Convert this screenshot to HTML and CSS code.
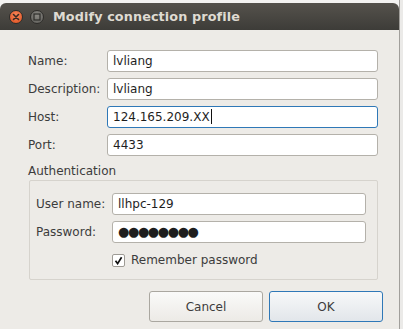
FILE: index.html
```html
<!DOCTYPE html>
<html lang="en">
<head>
    <meta charset="UTF-8">
    <meta name="viewport" content="width=device-width, initial-scale=1.0">
    <title>Modify connection profile</title>
    <link rel="stylesheet" href="styles.css">
</head>
<body>
    <div class="desktop">
        <div class="window">
            <!-- Title bar -->
            <div class="titlebar">
                <span class="wm-btn close">
                    <svg width="8" height="8" viewBox="0 0 8 8"><path d="M1.5 1.5 L6.5 6.5 M6.5 1.5 L1.5 6.5" stroke="#3a2a22" stroke-width="1.6" stroke-linecap="round"/></svg>
                </span>
                <span class="wm-btn maximize">
                    <svg width="8" height="8" viewBox="0 0 8 8"><rect x="1" y="1" width="6" height="6" fill="none" stroke="#2e2d2a" stroke-width="1.2"/></svg>
                </span>
                <span class="title">Modify connection profile</span>
            </div>

            <div class="content">
                <div class="form-grid">
                    <label for="name">Name:</label>
                    <div class="field" id="name">lvliang</div>

                    <label for="description">Description:</label>
                    <div class="field" id="description">lvliang</div>

                    <label for="host">Host:</label>
                    <div class="field focused" id="host">124.165.209.XX<span class="caret"></span></div>

                    <label for="port">Port:</label>
                    <div class="field" id="port">4433</div>
                </div>

                <div class="section-title">Authentication</div>

                <!-- Authentication group -->
                <div class="group">
                    <div class="form-grid auth-grid">
                        <label for="user">User name:</label>
                        <div class="field" id="user">llhpc-129</div>

                        <label for="password">Password:</label>
                        <div class="field password" id="password">●●●●●●●●</div>
                    </div>
                    <div class="remember">
                        <span class="checkbox">
                            <svg width="9" height="9" viewBox="0 0 9 9"><path d="M1.5 4.8 L3.6 7.6 L7.6 1.2" fill="none" stroke="#111" stroke-width="1.7"/></svg>
                        </span>
                        Remember password
                    </div>
                </div>

                <div class="buttons">
                    <button class="btn">Cancel</button>
                    <button class="btn default">OK</button>
                </div>
            </div>
        </div>
        <div class="edge"></div>
    </div>
</body>
</html>
```

FILE: styles.css
```css
body {
    margin: 0;
    background-color: #f4f3f1;
    font-family: "DejaVu Sans", sans-serif;
    font-size: 12px;
    color: #3c3c3c;
}

.desktop {
    display: flex;
    height: 329px;
    overflow: hidden;
}

.window {
    width: 400px;
    margin-top: 3px;
    display: flex;
    flex-direction: column;
}

.titlebar {
    height: 27px;
    display: flex;
    align-items: center;
    padding-left: 9px;
    border-radius: 6px 6px 0 0;
    background: linear-gradient(#55524c, #3d3c38);
}

.wm-btn {
    width: 12px;
    height: 12px;
    border-radius: 50%;
    display: flex;
    align-items: center;
    justify-content: center;
    margin-right: 7px;
    border: 1px solid #2e2d2a;
}

.close {
    background: radial-gradient(circle at 50% 35%, #f7875a, #df4f1e);
}

.maximize {
    background: radial-gradient(circle at 50% 35%, #8a8883, #5d5c58);
}

.title {
    margin-left: 2px;
    font-weight: bold;
    font-size: 12.8px;
    color: #dfdbd2;
    letter-spacing: 0.1px;
}

.content {
    flex: 1;
    background-color: #edebe7;
    padding: 20px 0 0 28px;
}

.form-grid {
    display: grid;
    grid-template-columns: 79px 271px;
    row-gap: 6px;
    align-items: center;
}

.field {
    height: 20px;
    line-height: 20px;
    padding: 0 5px;
    background-color: #fff;
    border: 1px solid #b4b1aa;
    border-radius: 3px;
    color: #1e1e1e;
    white-space: nowrap;
}

.field.focused {
    border-color: #2f78b7;
}

.caret {
    display: inline-block;
    width: 1px;
    height: 15px;
    margin-left: 1px;
    vertical-align: -3px;
    background-color: #111;
}

.password {
    font-size: 13px;
    letter-spacing: -1.4px;
}

.section-title {
    margin-top: 7px;
    height: 17px;
    line-height: 17px;
}

.group {
    width: 341px;
    margin-left: 1px;
    padding: 12px 0 12px 6px;
    border: 1px solid #d6d3cd;
    border-radius: 2px;
}

.auth-grid {
    grid-template-columns: 76px 254px;
}

.remember {
    display: flex;
    align-items: center;
    margin: 10px 0 0 76px;
    height: 14px;
}

.checkbox {
    width: 11px;
    height: 11px;
    margin-right: 6px;
    display: flex;
    align-items: center;
    justify-content: center;
    background-color: #fff;
    border: 1px solid #9e9b95;
    border-radius: 2px;
}

.buttons {
    display: flex;
    justify-content: flex-end;
    gap: 6px;
    margin-top: 11px;
    padding-right: 16px;
}

.btn {
    width: 114px;
    height: 31px;
    font-family: "DejaVu Sans", sans-serif;
    font-size: 12px;
    color: #3c3c3c;
    border: 1px solid #aaa7a0;
    border-radius: 3px;
    background: linear-gradient(#fafaf9, #eceae6);
}

.btn.default {
    border-color: #2f78b7;
    background: linear-gradient(#f7f8f9, #e2e6ea);
}

.edge {
    width: 3px;
    border-left: 1px solid #a19f9b;
    background-color: #ebeae8;
}
```
